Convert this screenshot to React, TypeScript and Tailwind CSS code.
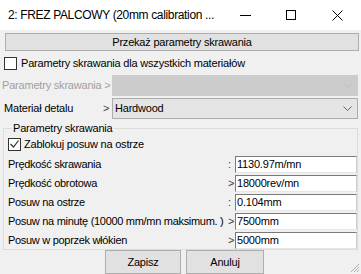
import React from "react";

const font = { fontFamily: '"Liberation Sans", Arial, sans-serif' };

const Chevron = ({ color = "#606060" }: { color?: string }) => (
  <svg width="9" height="6" viewBox="0 0 9 6">
    <path d="M0.5 0.5 L4.5 4.5 L8.5 0.5" stroke={color} strokeWidth="1" fill="none" />
  </svg>
);

const Row = ({ label, sep, value }: { label: string; sep: string; value: string }) => (
  <div className="flex h-[19px] items-center">
    <span className="w-[224px] pl-[4px] tracking-[-0.3px]">{label}</span>
    <span className="w-[7px] text-left text-[#404040]">{sep}</span>
    <div className="flex h-[17px] w-[122px] items-center border-t border-l border-t-[#7a7a7a] border-l-[#7a7a7a] border-r border-b border-r-[#cfcfcf] border-b-[#e6e6e6] bg-white pl-[1px]">
      {value}
    </div>
  </div>
);

const App = () => {
  return (
    <div
      className="relative h-[274px] w-[361px] overflow-hidden whitespace-nowrap bg-[#f0f0f0] text-[11px] tracking-[-0.2px] text-black"
      style={font}
    >
      {/* title bar */}
      <div className="flex h-[30px] items-center bg-white">
        <span className="w-[232px] pl-[8px] text-[12px] tracking-[-0.35px]">2: FREZ PALCOWY (20mm calibration ...</span>
        <div className="ml-[8px] h-px w-[11px] bg-black" />
        <div className="ml-[35px] h-[10px] w-[10px] border border-black" />
        <svg className="ml-[36px]" width="11" height="11" viewBox="0 0 11 11">
          <path d="M0.5 0.5 L10.5 10.5 M10.5 0.5 L0.5 10.5" stroke="#000" strokeWidth="1" />
        </svg>
      </div>

      <div className="flex flex-col">
        <button className="mt-[3px] ml-[5px] mr-[2px] h-[18px] border border-[#adadad] bg-[#e1e1e1] leading-none">
          Przekaż parametry skrawania
        </button>

        <label className="mt-[6px] flex h-[13px] items-center">
          <span className="ml-[4px] h-[13px] w-[13px] border border-[#333] bg-white" />
          <span className="ml-[4px]">Parametry skrawania dla wszystkich materiałów</span>
        </label>

        <div className="mt-[5px] flex h-[21px] items-center">
          <span className="w-[112px] pl-[2px] text-[#a0a0a0]">Parametry skrawania &gt;</span>
          <div className="mr-[3px] flex h-[21px] flex-1 items-center justify-end bg-[#cccccc] pr-[5px]">
            <Chevron color="#bdbdbd" />
          </div>
        </div>

        <div className="mt-[2px] flex h-[21px] items-center">
          <span className="w-[103px] pl-[4px]">Materiał detalu</span>
          <span className="w-[9px] text-[#404040]">&gt;</span>
          <div className="mr-[3px] flex h-[21px] flex-1 items-center justify-between border border-[#adadad] bg-[#e5e5e5] pl-[2px] pr-[5px]">
            <span>Hardwood</span>
            <Chevron />
          </div>
        </div>

        <fieldset className="mx-[3px] mt-[2px] h-[129px] border border-[#dcdcdc] px-0 pt-0">
          <legend className="ml-[8px] px-[1px] leading-[14px]">Parametry skrawania</legend>
          <label className="mt-[1px] flex h-[16px] items-center">
            <span className="ml-[4px] flex h-[13px] w-[13px] items-center justify-center border border-[#333] bg-white">
              <svg width="9" height="8" viewBox="0 0 9 8">
                <path d="M0.5 4 L3.5 7 L8.5 0.5" stroke="#333" strokeWidth="1.2" fill="none" />
              </svg>
            </span>
            <span className="ml-[3px]">Zablokuj posuw na ostrze</span>
          </label>
          <div className="mt-[3px] flex flex-col">
            <Row label="Prędkość skrawania" sep=":" value="1130.97m/mn" />
            <Row label="Prędkość obrotowa" sep=">" value="18000rev/mn" />
            <Row label="Posuw na ostrze" sep=":" value="0.104mm" />
            <Row label="Posuw na minutę (10000 mm/mn maksimum. )" sep=">" value="7500mm" />
            <Row label="Posuw w poprzek włókien" sep=">" value="5000mm" />
          </div>
        </fieldset>

        <div className="flex justify-center gap-[5px] pl-[8px]">
          <button className="h-[24px] w-[76px] border border-[#adadad] bg-[#e1e1e1]">Zapisz</button>
          <button className="h-[24px] w-[78px] border border-[#adadad] bg-[#e1e1e1]">Anuluj</button>
        </div>
      </div>

      {/* resize grip */}
      <svg className="absolute right-[1px] bottom-[1px]" width="11" height="11" viewBox="0 0 11 11">
        <path d="M10 2 L2 10 M10 5 L5 10 M10 8 L8 10" stroke="#b0b0b0" strokeWidth="1" />
      </svg>
    </div>
  );
};

export default App;
